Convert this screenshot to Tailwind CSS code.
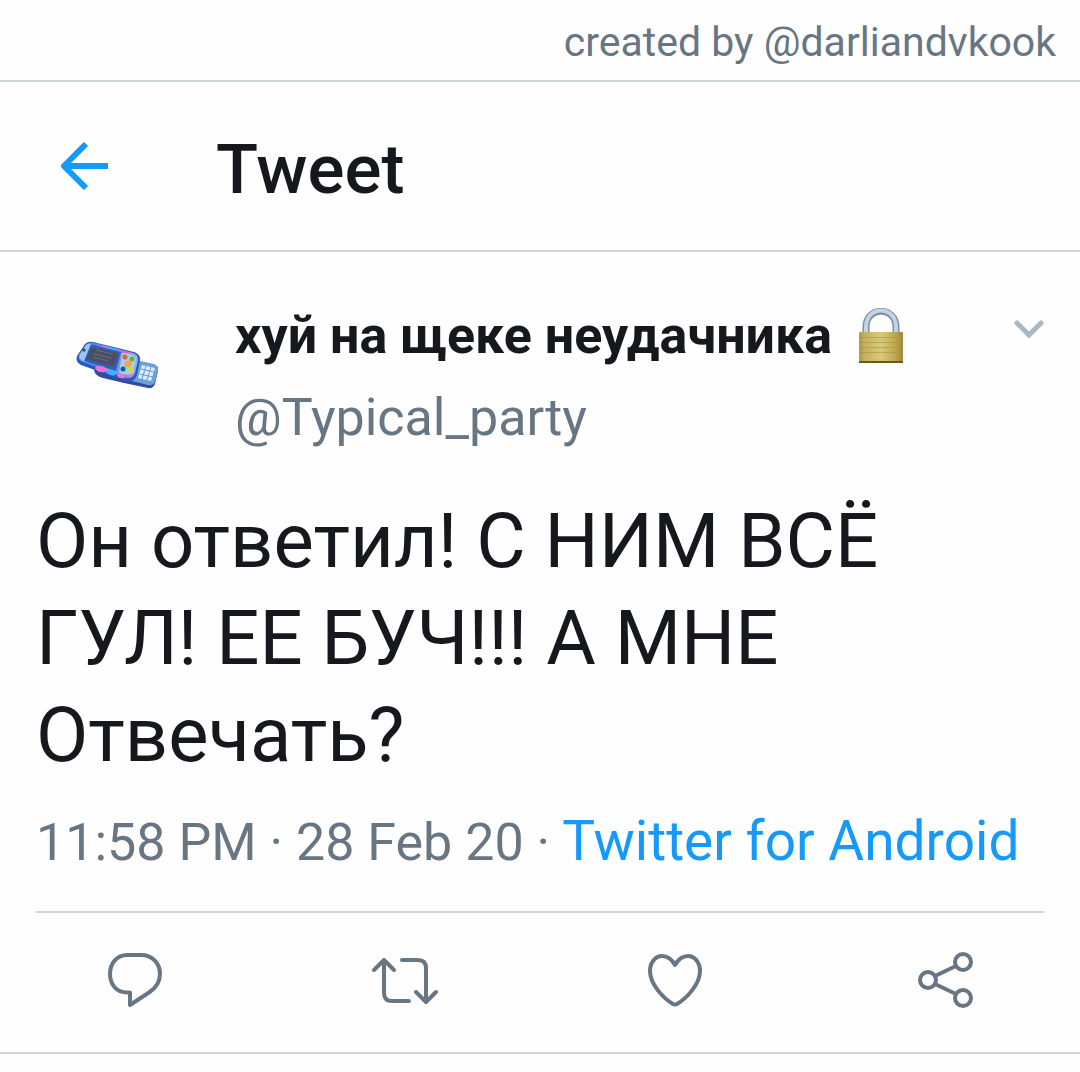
<!DOCTYPE html>
<html lang="en">
<head>
    <meta charset="UTF-8">
    <meta name="viewport" content="width=device-width, initial-scale=1.0">
    <title>Tweet</title>
    <script src="https://cdn.jsdelivr.net/npm/@tailwindcss/browser@4"></script>
</head>
<body class="bg-[#fefefe] font-[Roboto,sans-serif] text-[#15181c]">

    <!-- Credit -->
    <div class="border-b-2 border-[#ccd4de] px-6 pt-3 pb-2 text-right text-[41px] leading-[60px] text-[#687684]">created by @darliandvkook</div>

    <!-- Header -->
    <header class="flex items-center border-b-2 border-[#d0d3da] px-15 py-10">
        <button type="button" aria-label="Back" class="text-[#1599fa]">
            <svg class="block h-12 w-12" viewBox="0 0 48 48" fill="none" stroke="currentColor" stroke-width="6" stroke-linejoin="round"><path d="M48 24H4M26 2L4 24L26 46"/></svg>
        </button>
        <h1 class="ml-[108px] pt-2 text-[69px] leading-20 font-medium">Tweet</h1>
    </header>

    <main class="border-b-2 border-[#d0d3da]">
        <article class="px-9">

            <!-- Author -->
            <div class="flex pt-11">
                <!-- Slider phone avatar -->
                <svg class="mt-11 ml-9 block h-15 w-[90px] shrink-0" viewBox="0 0 90 60" role="img" aria-label="Avatar">
                    <defs>
                        <linearGradient id="shell" x1="0" y1="0" x2="1" y2="0">
                            <stop offset="0" stop-color="#5f8fe0"/>
                            <stop offset=".3" stop-color="#5f86e8"/>
                            <stop offset=".45" stop-color="#e070e8"/>
                            <stop offset=".58" stop-color="#35b8ff"/>
                            <stop offset=".78" stop-color="#e45cd4"/>
                            <stop offset="1" stop-color="#7fc0f0"/>
                        </linearGradient>
                        <filter id="soft"><feGaussianBlur stdDeviation=".7"/></filter>
                    </defs>
                    <g filter="url(#soft)">
                        <path d="M22 30L81 24Q87 26 86 31L83 44Q81 49 76 48L52 43L31 38Q23 36 22 30Z" fill="#2f4ca0"/>
                        <path d="M64 20L82 24Q87 26 86 31L83 42Q81 46 76 45L60 41Z" fill="#6d9fdb"/>
                        <path d="M70 25L83 28L79 41L66 38Z" fill="#d9efff"/>
                        <path d="M74 26L70 39M79 27L75 40M69 29L82 32M68 34L81 37" stroke="#6a93c4" stroke-width="1"/>
                        <path d="M13 4Q16 1 21 2L58 11Q69 13 68 20L65 35Q62 43 54 41L9 25Q3 22 5 16Z" fill="#2458c8"/>
                        <path d="M14 5Q17 2 22 3L58 12Q67 14 66 20L63 33Q61 39 54 38L11 22Q5 20 7 15Z" fill="url(#shell)"/>
                        <path d="M14 5Q16 3 21 4L14 22L11 21Q6 19 8 14Z" fill="#a0c4ee"/>
                        <path d="M19 4L49 12L44 31L12 21Z" fill="#2a62c0"/>
                        <path d="M20 7L46 13L42 27L14 19Z" fill="#4c5064"/>
                        <path d="M24 10L41 14M22 14L39 18M21 17L36 21" stroke="#6b6a7e" stroke-width="1"/>
                        <circle cx="12" cy="10" r="1.5" fill="#203b65"/>
                        <path d="M50 13Q65 14 64 20L61 32Q59 37 47 33Z" fill="#9ad6e0"/>
                        <circle cx="53" cy="17" r="2.5" fill="#e0603c"/>
                        <circle cx="60" cy="19" r="2.5" fill="#7aa83c"/>
                        <circle cx="56" cy="24" r="3.5" fill="#f1a648"/>
                        <circle cx="59" cy="30" r="3" fill="#c8d858"/>
                        <circle cx="51" cy="29" r="2.5" fill="#1c55b8"/>
                        <ellipse cx="29" cy="29" rx="6" ry="3" transform="rotate(15 29 29)" fill="#f070d8"/>
                        <ellipse cx="39" cy="33" rx="5" ry="2" transform="rotate(15 39 33)" fill="#35b8ff"/>
                        <ellipse cx="49" cy="36" rx="4" ry="2" transform="rotate(15 49 36)" fill="#f070d8"/>
                    </g>
                </svg>

                <div class="ml-[73px] flex-1">
                    <div class="flex items-center">
                        <h2 class="text-[52px] leading-20 font-bold whitespace-nowrap">хуй на щеке неудачника</h2>
                        <!-- Padlock -->
                        <svg class="ml-[26px] block h-14 w-[46px] shrink-0" viewBox="0 0 46 56" role="img" aria-label="Locked account">
                            <defs>
                                <linearGradient id="brass" x1="0" y1="0" x2="1" y2="0">
                                    <stop offset="0" stop-color="#b09a45"/>
                                    <stop offset=".12" stop-color="#c5b05a"/>
                                    <stop offset=".5" stop-color="#d8c878"/>
                                    <stop offset=".8" stop-color="#c0aa50"/>
                                    <stop offset="1" stop-color="#a08a38"/>
                                </linearGradient>
                            </defs>
                            <path d="M8 27V19C8 -2 38 -2 38 19V27" fill="none" stroke="#7e8f9f" stroke-width="7"/>
                            <path d="M8 27V19C8 -3 38 -3 38 19V27" fill="none" stroke="#c3d4e4" stroke-width="4"/>
                            <rect x="1" y="24" width="44" height="31" rx="1" fill="url(#brass)"/>
                            <path d="M1 29.5H45M1 34.5H45M1 39.5H45M1 44.5H45" stroke="#a68d3c" stroke-width="1" opacity=".5"/>
                            <path d="M1 54H45" stroke="#6b5624" stroke-width="2"/>
                        </svg>
                        <button type="button" aria-label="More" class="mt-[22px] ml-auto self-start text-[#aab8c4]">
                            <svg class="block h-5 w-[30px]" viewBox="0 0 30 20" fill="none" stroke="currentColor" stroke-width="5" stroke-linecap="round"><path d="M3 5L15 17L27 5"/></svg>
                        </button>
                    </div>
                    <p class="pt-0.5 text-[52px] leading-20 text-[#687684]">@Typical_party</p>
                </div>
            </div>

            <p class="mt-[35px] text-[76px] leading-[97px]">Он ответил! С НИМ ВСЁ<br>ГУЛ! ЕЕ БУЧ!!! А МНЕ<br>Отвечать?</p>

            <p class="mt-[17px] flex items-baseline gap-3 text-[52px] leading-20 whitespace-nowrap text-[#687684]">
                <span>11:58 PM · 28 Feb 20 ·</span>
                <a href="#" class="text-[55px] text-[#1599fa]">Twitter for Android</a>
            </p>

            <!-- Actions -->
            <div class="mt-7 flex justify-between border-t-2 border-[#d0d3da] pt-[35px] pr-[68px] pb-10 pl-16 text-[#687684]">
                <button type="button" aria-label="Reply">
                    <svg class="block h-16 w-16" viewBox="0 0 64 64" fill="none" stroke="currentColor" stroke-width="4" stroke-linejoin="round"><path d="M27 7H41C52 7 60 15 60 26C60 34 56 40 49 44.500L30 57V44.500H27C16 44.500 10 36 10 26C10 15 17 7 27 7Z"/></svg>
                </button>
                <button type="button" aria-label="Retweet">
                    <svg class="block h-16 w-[70px]" viewBox="0 0 70 64" fill="none" stroke="currentColor" stroke-width="4" stroke-linecap="round" stroke-linejoin="round"><path d="M5 22L15 12L25 22M15 12V45Q15 53 23 53H40M33 12H49Q57 12 57 20V53M47 44L57 54L67 44"/></svg>
                </button>
                <button type="button" aria-label="Like">
                    <svg class="block h-16 w-16" viewBox="0 0 64 64" fill="none" stroke="currentColor" stroke-width="4" stroke-linejoin="round"><path d="M32 17C28 10 23 8 19 8C12 8 7 15 7 23C7 36 20 50 30 56Q32 57 34 56C44 50 57 36 57 23C57 15 52 8 45 8C40 8 36 10 32 17Z"/></svg>
                </button>
                <button type="button" aria-label="Share">
                    <svg class="block h-16 w-16" viewBox="0 0 64 64" fill="none" stroke="currentColor" stroke-width="4"><circle cx="51" cy="14" r="8"/><circle cx="16" cy="32" r="8"/><circle cx="51" cy="50" r="8"/><path d="M23 28L44 18M23 36L44 46"/></svg>
                </button>
            </div>
        </article>
    </main>

</body>
</html>
